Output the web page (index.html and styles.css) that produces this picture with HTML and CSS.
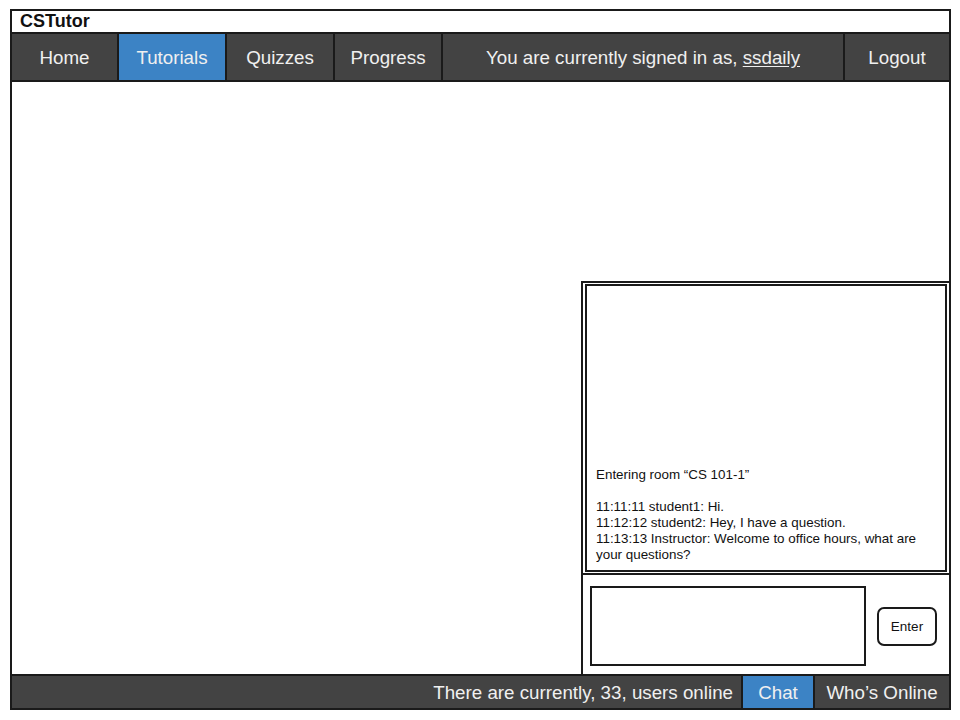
FILE: index.html
```html
<!DOCTYPE html>
<html>
<head>
<meta charset="utf-8">
<link rel="stylesheet" href="styles.css">
</head>
<body>
<div class="frame">
  <div class="title">CSTutor</div>
  <div class="nav">
    <div class="cell w107">Home</div>
    <div class="cell w108 active">Tutorials</div>
    <div class="cell w108">Quizzes</div>
    <div class="cell w108">Progress</div>
    <div class="cell w402">You are currently signed in as,&nbsp;<u>ssdaily</u></div>
    <div class="cell grow last">Logout</div>
  </div>
  <div class="main">
    <div class="chat">
      <div class="messages">
        <p>Entering room “CS 101-1”</p>
        <p class="gap">11:11:11 student1: Hi.<br>11:12:12 student2: Hey, I have a question.<br>11:13:13 Instructor: Welcome to office hours, what are your questions?</p>
      </div>
      <div class="input">
        <div class="textbox"></div>
        <div class="enter">Enter</div>
      </div>
    </div>
  </div>
  <div class="footer">
    <div class="online">There are currently, 33, users online</div>
    <div class="fcell active chatcell">Chat</div>
    <div class="fcell who">Who’s Online</div>
  </div>
</div>
</body>
</html>
```

FILE: styles.css
```css
* { box-sizing: border-box; }
html, body { margin: 0; padding: 0; background: #fff; }
body { font-family: "Liberation Sans", Arial, sans-serif; color: #111; }

.frame {
  margin: 9px 0 0 10px;
  width: 941px;
  height: 701px;
  border: 2px solid #1a1a1a;
  display: flex;
  flex-direction: column;
}

.title {
  height: 23px;
  border-bottom: 2px solid #1a1a1a;
  font-weight: bold;
  font-size: 18px;
  line-height: 21px;
  padding-left: 8px;
}

.nav {
  height: 48px;
  display: flex;
  background: #434343;
  border-bottom: 2px solid #1a1a1a;
}
.cell {
  border-right: 2px solid #1a1a1a;
  color: #f0f0f0;
  font-size: 18.75px;
  display: flex;
  align-items: center;
  justify-content: center;
  padding-top: 1px;
}
.cell u { text-underline-offset: 2px; }
.w107 { width: 107px; }
.w108 { width: 108px; }
.w402 { width: 402px; }
.grow { flex: 1; }
.last { border-right: none; }
.active { background: #3c83c5; }

.main {
  flex: 1;
  display: flex;
  justify-content: flex-end;
  align-items: flex-end;
}

.chat {
  width: 368px;
  height: 393px;
  border-left: 2px solid #1a1a1a;
  border-top: 2px solid #1a1a1a;
  display: flex;
  flex-direction: column;
}

.messages {
  margin: 1px 0 1px 2px;
  width: 362px;
  height: 288px;
  border: 2px solid #1a1a1a;
  padding: 0 8px 7px 9px;
  display: flex;
  flex-direction: column;
  justify-content: flex-end;
  font-size: 13.4px;
  line-height: 16px;
  color: #111;
}
.messages p { margin: 0; }
.messages .gap { margin-top: 16px; }

.input {
  flex: 1;
  border-top: 2px solid #1a1a1a;
  display: flex;
  align-items: flex-start;
  padding: 11px 0 0 7px;
}
.textbox {
  width: 276px;
  height: 80px;
  border: 2px solid #1a1a1a;
}
.enter {
  margin: 21px 0 0 11px;
  width: 60px;
  height: 39px;
  border: 2px solid #1a1a1a;
  border-radius: 7px;
  font-size: 13.5px;
  display: flex;
  align-items: center;
  justify-content: center;
}

.footer {
  height: 34px;
  background: #434343;
  border-top: 2px solid #1a1a1a;
  display: flex;
  justify-content: flex-end;
  color: #f0f0f0;
  font-size: 18.75px;
  padding-top: 2px;
}
.online {
  display: flex;
  align-items: center;
  padding-right: 8px;
}
.fcell {
  display: flex;
  align-items: center;
  justify-content: center;
}
.chatcell {
  width: 74px;
  margin-top: -2px;
  padding-top: 2px;
  border-left: 2px solid #1a1a1a;
  border-right: 2px solid #1a1a1a;
}
.who { width: 134px; }
```
